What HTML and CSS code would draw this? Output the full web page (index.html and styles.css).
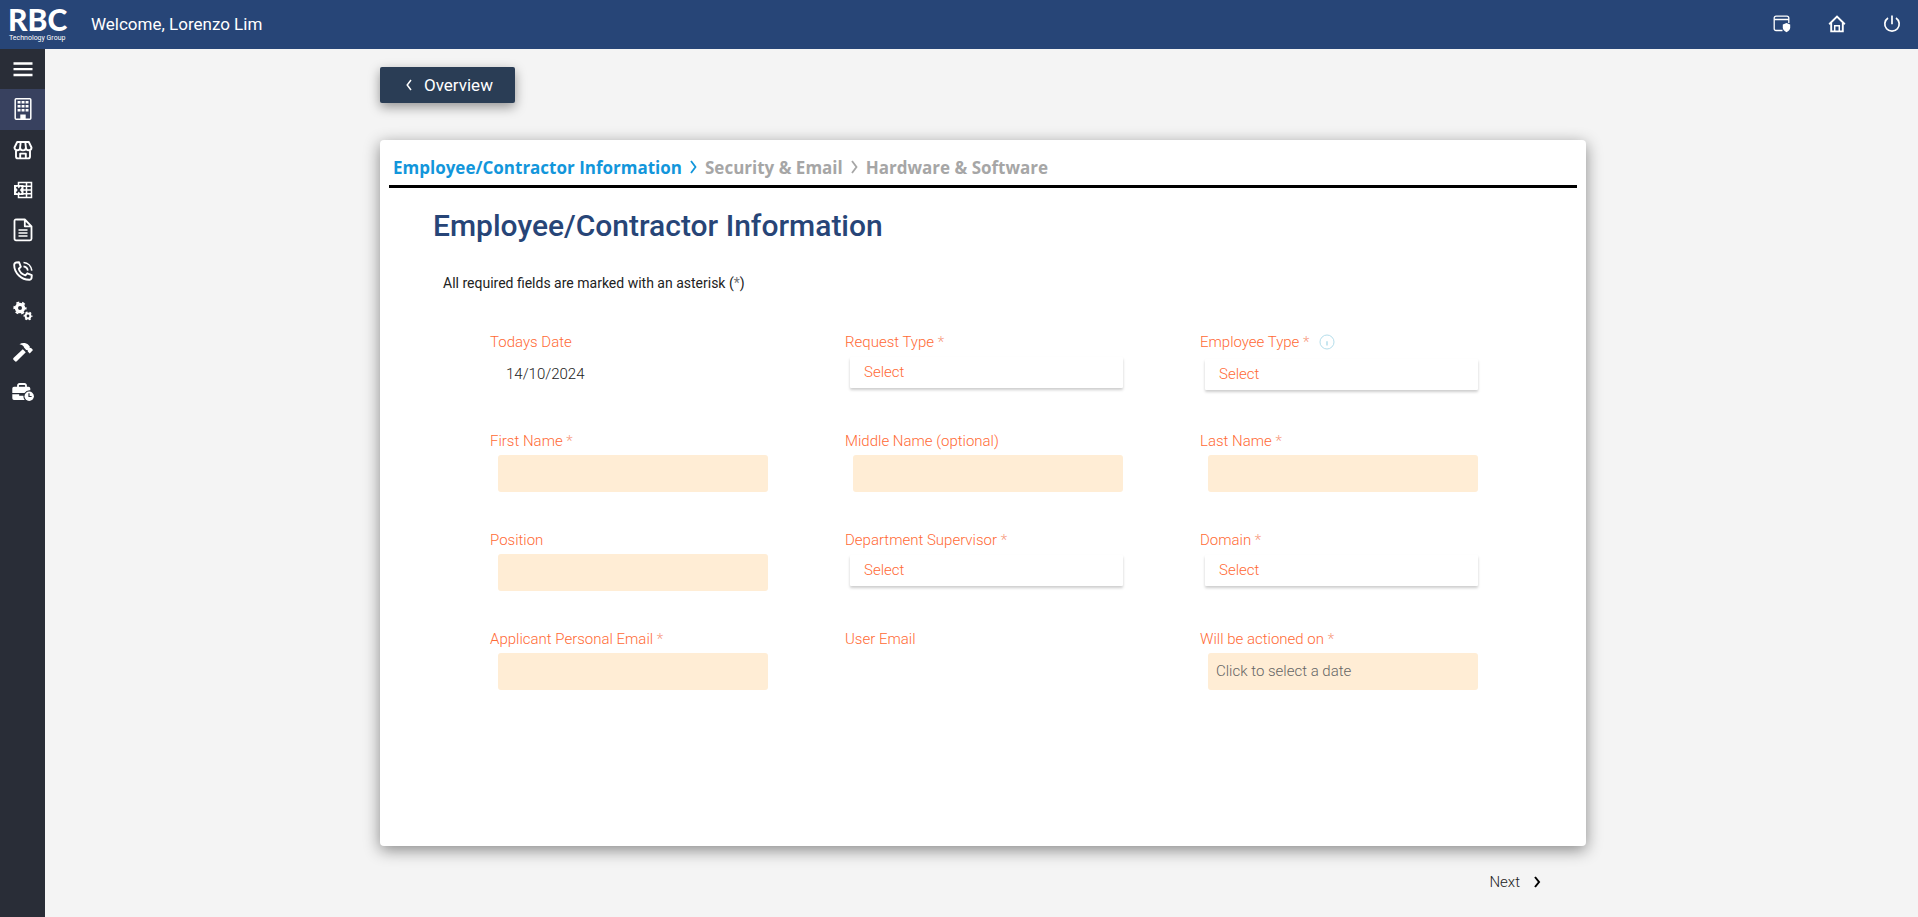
FILE: index.html
```html
<!DOCTYPE html>
<html lang="en">
<head>
<meta charset="utf-8">
<title>Employee/Contractor Information</title>
<link rel="stylesheet" href="styles.css">
</head>
<body>
<header class="topbar">
  <a class="logo" href="#"><span class="logo-name">RBC</span><span class="logo-sub">Technology Group</span></a>
  <span class="welcome">Welcome, Lorenzo Lim</span>
  <div class="actions">
    <button class="icon-btn" type="button" aria-label="Security window">
      <svg width="18" height="18" viewBox="0 0 18 18" fill="none" stroke="#fff"><path d="M9.500 15.500H3A1.800 1.800 0 0 1 1.200 13.700V3A1.800 1.800 0 0 1 3 1.200h11A1.800 1.800 0 0 1 15.800 3v5" stroke-width="1.300"/><path d="M1.200 4.500h14.600" stroke-width="1.500"/><path d="M13.500 8l3.700 1.400v3.200c0 2.200-1.500 3.700-3.700 4.700-2.200-1-3.700-2.500-3.700-4.700V9.400z" fill="#fff" stroke="none"/></svg>
    </button>
    <button class="icon-btn" type="button" aria-label="Home">
      <svg width="18" height="18" viewBox="0 0 18 18" fill="none" stroke="#fff" stroke-width="1.900"><path d="M1.200 9.200L9 1.500l7.800 7.700"/><path d="M3.200 8v8.400h11.600V8"/><path d="M6.700 16v-5.300h4.600V16" stroke-width="1.500"/></svg>
    </button>
    <button class="icon-btn" type="button" aria-label="Log out">
      <svg width="18" height="18" viewBox="0 0 18 18" fill="none" stroke="#fff" stroke-width="1.700"><path d="M9 .5v8.700M5 3A7.200 7.200 0 1 0 13 3"/></svg>
    </button>
  </div>
</header>
<div class="shell">
  <nav class="sidebar" aria-label="Main">
    <div class="side-list">
    <button class="side-item" type="button" aria-label="Menu"><svg width="20" height="20" viewBox="0 0 20 20"><path d="M.5 4.500h19M.5 10.200h19M.5 16h19" stroke="#fff" stroke-width="2.300"/></svg></button>
    <a class="side-item active" href="#" aria-label="Company"><svg width="18" height="22" viewBox="0 0 18 22" fill="#fff"><rect x="1.200" y=".8" width="15.600" height="20.400" rx="1" fill="none" stroke="#fff" stroke-width="1.500"/><path d="M3.600 3h2.900v2.600H3.600zM7.600 3h2.900v2.600H7.600zM11.600 3h2.900v2.600h-2.900zM3.600 7h2.900v2.600H3.600zM7.600 7h2.900v2.600H7.600zM11.600 7h2.900v2.600h-2.900zM3.600 11h2.900v2.600H3.600zM7.600 11h2.900v2.600H7.600zM11.600 11h2.900v2.600h-2.900zM6.300 16.500h5.400v4.500H6.300z"/></svg></a>
    <a class="side-item" href="#" aria-label="Store"><svg width="20" height="20" viewBox="0 0 20 20" fill="none" stroke="#fff" stroke-width="1.900" stroke-linejoin="round"><path d="M4.200 2h11.600L18.500 7.500a2.700 2.700 0 0 1-5.600 0 2.900 2.900 0 0 1-5.800 0 2.700 2.700 0 0 1-5.600 0zM7.700 2l-.6 5.500M12.300 2l.6 5.500"/><path d="M3 10.500v5.900a2 2 0 0 0 2 2h10a2 2 0 0 0 2-2v-5.900M7.200 18v-4.400h5.600V18"/></svg></a>
    <a class="side-item" href="#" aria-label="Spreadsheets"><svg width="20" height="18" viewBox="0 0 20 18"><path d="M5.500 1.500h13v15h-13zM10 5.200h8.500M10 9h8.500M10 12.800h8.500M13.500 1.500v15" fill="none" stroke="#fff" stroke-width="1.500"/><path d="M1 4h9.500v10H1z" fill="#fff"/><path d="M3.600 6l4.400 6M8 6l-4.400 6" stroke="#292d37" stroke-width="1.900"/></svg></a>
    <a class="side-item" href="#" aria-label="Documents"><svg width="20" height="24" viewBox="0 0 20 24" fill="none" stroke="#fff" stroke-width="1.800" stroke-linejoin="round"><path d="M3.500 1.500h8.300l6.700 6.800v12.500a1.500 1.500 0 0 1-1.500 1.500H3A1.500 1.500 0 0 1 1.500 20.800V3A1.500 1.500 0 0 1 3.500 1.500zM11.800 1.500v6.800h6.700"/><path d="M5.500 12h9M5.500 15h9M5.500 18h9" stroke-width="1.700"/></svg></a>
    <a class="side-item" href="#" aria-label="Calls"><svg width="20" height="20" viewBox="0 0 20 20" fill="none" stroke="#fff" stroke-width="1.900" stroke-linejoin="round"><path d="M3.200 1.500L6 1.200l1.800 4.600-2 1.900c.8 3 3.500 5.600 6.600 6.600l1.900-2 4.500 1.900-.3 3.100c-.3.900-.9 1.300-1.800 1.400C8.500 19 1.200 12 1.200 4c0-1.500.6-2.200 2-2.500z"/><path d="M10.500 5.300a5 5 0 0 1 4.300 4.400M10.500 1.500c4.500.3 7.800 3.600 8.300 8.200" stroke-width="1.700"/></svg></a>
    <a class="side-item" href="#" aria-label="Settings"><svg width="20" height="20" viewBox="0 0 20 20" fill="none" stroke="#fff"><circle cx="7" cy="7" r="3.600" stroke-width="3.200"/><circle cx="7" cy="7" r="5.700" stroke-width="1.800" stroke-dasharray="3 2.970" stroke-dashoffset="1.500"/><circle cx="15" cy="15" r="2.400" stroke-width="2"/><circle cx="15" cy="15" r="3.800" stroke-width="1.300" stroke-dasharray="2 1.980" stroke-dashoffset="1"/></svg></a>
    <a class="side-item" href="#" aria-label="Tools"><svg width="20" height="20" viewBox="0 0 20 20" fill="#fff"><path d="M6.500 2.200C9 .5 13 .5 15.500 3l1.300 1.500-.2 1.200 1.500.2L20 8l-3.300 3.400-1.900-2-.2-1.500-1.400.2-2-2.300c-.4-1.800-2-3-4.700-3.600z"/><path d="M9.800 7.200l3 3-8.800 8.900c-.7.700-1.500.7-2.200 0l-1.100-1.100c-.7-.7-.7-1.500 0-2.200z"/></svg></a>
    <a class="side-item" href="#" aria-label="Work history"><svg width="22" height="18" viewBox="0 0 22 18"><path d="M6 4V2.500A1.500 1.500 0 0 1 7.500 1h5A1.500 1.500 0 0 1 14 2.500V4" fill="none" stroke="#fff" stroke-width="1.800"/><path d="M2 3.800h14.500A1.800 1.800 0 0 1 18.300 5.600V7.300A6 6 0 0 0 12.500 10H.3V5.500A1.700 1.700 0 0 1 2 3.800zM.3 11.200H7.200v1.500h4.200A6 6 0 0 0 12.700 17H2A1.700 1.700 0 0 1 .3 15.300z" fill="#fff"/><circle cx="17.200" cy="13.200" r="4.700" fill="#fff"/><path d="M17 10.300v3.200h2.600" fill="none" stroke="#292d37" stroke-width="1.200"/></svg></a>
    </div>
  </nav>
  <main class="main">
    <button class="overview" type="button"><svg width="6" height="12" viewBox="0 0 6 12" fill="none" stroke="#fff" stroke-width="1.500"><path d="M5 1L1.200 6 5 11"/></svg>Overview</button>
    <form class="card">
      <ol class="steps">
        <li class="current">Employee/Contractor Information</li>
        <li class="sep current" aria-hidden="true"><svg width="7" height="14" viewBox="0 0 7 14" fill="none" stroke="currentColor" stroke-width="1.800"><path d="M1 1l4.500 6L1 13"/></svg></li>
        <li>Security &amp; Email</li>
        <li class="sep" aria-hidden="true"><svg width="7" height="14" viewBox="0 0 7 14" fill="none" stroke="currentColor" stroke-width="1.800"><path d="M1 1l4.500 6L1 13"/></svg></li>
        <li>Hardware &amp; Software</li>
      </ol>
      <h1 class="title">Employee/Contractor Information</h1>
      <p class="note">All required fields are marked with an asterisk (<span class="req">*</span>)</p>
      <div class="fields">
        <div class="field"><span class="label">Todays Date</span><span class="date">14/10/2024</span></div>
        <div class="field"><label class="label" for="request">Request Type <span class="req">*</span></label><select class="select" id="request"><option>Select</option></select></div>
        <div class="field"><label class="label with-info" for="etype"><span>Employee Type <span class="req">*</span></span><svg class="info" width="16" height="16" viewBox="0 0 16 16" fill="none" stroke="#b5deeb"><circle cx="8" cy="8" r="7"/><path d="M8 7.200v4.300" stroke-width="1.500"/></svg></label><select class="select" id="etype"><option>Select</option></select></div>
        <div class="field"><label class="label" for="first">First Name <span class="req">*</span></label><input class="input" id="first" type="text"></div>
        <div class="field"><label class="label" for="middle">Middle Name (optional)</label><input class="input" id="middle" type="text"></div>
        <div class="field"><label class="label" for="last">Last Name <span class="req">*</span></label><input class="input" id="last" type="text"></div>
        <div class="field"><label class="label" for="position">Position</label><input class="input" id="position" type="text"></div>
        <div class="field"><label class="label" for="supervisor">Department Supervisor <span class="req">*</span></label><select class="select" id="supervisor"><option>Select</option></select></div>
        <div class="field"><label class="label" for="domain">Domain <span class="req">*</span></label><select class="select" id="domain"><option>Select</option></select></div>
        <div class="field"><label class="label" for="email">Applicant Personal Email <span class="req">*</span></label><input class="input" id="email" type="email"></div>
        <div class="field"><span class="label">User Email</span></div>
        <div class="field"><label class="label" for="actioned">Will be actioned on <span class="req">*</span></label><input class="input" id="actioned" type="text" placeholder="Click to select a date"></div>
      </div>
    </form>
    <button class="next" type="button">Next<svg width="7" height="12" viewBox="0 0 7 12" fill="none" stroke="#000" stroke-width="2"><path d="M1 1l4 5-4 5"/></svg></button>
  </main>
</div>
</body>
</html>
```
FILE: styles.css
```css
* { box-sizing: border-box; }
body {
  margin: 0;
  min-height: 100vh;
  display: flex;
  flex-direction: column;
  background: #f4f4f4;
  font-family: Roboto, "Open Sans", sans-serif;
  font-size: 15px;
  color: #222;
}
button, input, select { font: inherit; color: inherit; border: 0; margin: 0; }
button { cursor: pointer; background: none; padding: 0; }
svg { display: block; flex: none; }

.topbar {
  display: flex;
  align-items: center;
  height: 49px;
  padding: 0 17px 2px 8px;
  background: #274577;
  color: #fff;
}
.logo {
  display: flex;
  flex-direction: column;
  width: 83px;
  color: #fff;
  text-decoration: none;
}
.logo-name { font-family: Lato, "Open Sans", sans-serif; font-size: 30px; line-height: 28px; font-weight: 900; }
.logo-sub { padding-left: 1px; font-size: 7px; line-height: 10px; white-space: nowrap; }
.welcome { font-size: 17px; line-height: 24px; }
.actions { display: flex; gap: 37px; margin-left: auto; }
.icon-btn { width: 18px; height: 18px; }

.shell { flex: 1; display: flex; }
.sidebar { width: 45px; flex: none; background: #292d37; }
.side-list {
  display: grid;
  grid-template-rows: repeat(9, 1fr);
  height: 364px;
}
.side-item { display: flex; align-items: center; justify-content: center; padding-bottom: 1px; }
.active { background: #38415f; }

.main {
  flex: 1;
  display: flex;
  flex-direction: column;
  align-items: flex-start;
  padding: 18px 332px 20px 335px;
}
.overview {
  display: flex;
  align-items: center;
  gap: 12px;
  height: 36px;
  padding: 0 22px 1px 26px;
  border-radius: 2px;
  background: #2a3d55;
  color: #fff;
  font-size: 17px;
  box-shadow: 0 4px 12px rgba(0, 0, 0, .4);
}
.card {
  width: 100%;
  min-height: 706px;
  margin-top: 37px;
  padding: 9px;
  border-radius: 4px;
  background: #fff;
  box-shadow: 0 4px 16px rgba(0, 0, 0, .45);
}
.steps {
  display: flex;
  align-items: center;
  gap: 8px;
  height: 39px;
  margin: 0;
  padding: 0 4px;
  border-bottom: 3px solid #000;
  list-style: none;
  font-family: "Open Sans", "Noto Sans", sans-serif;
  font-size: 17px;
  font-weight: 700;
  color: #a6a6a6;
}
.current { color: #1296db; }
.title {
  margin: 20px 0 0 44px;
  font-size: 30px;
  line-height: 36px;
  font-weight: 500;
  color: #274577;
}
.note { margin: 29px 0 0 54px; font-size: 14px; line-height: 20px; }
.note .req { color: #777; }
.fields {
  display: grid;
  grid-template-columns: repeat(3, 1fr);
  grid-auto-rows: 99px;
  margin: 38px 22px 0 101px;
}
.field { display: flex; flex-direction: column; align-items: flex-start; }
.label { line-height: 22px; font-weight: 300; color: #ff6a35; }
.with-info { display: flex; align-items: flex-start; gap: 10px; min-height: 24px; }
.info { margin-top: 3px; }
.label .req { color: #f79a80; }
.date { margin: 11px 0 0 16px; line-height: 20px; font-weight: 300; }
.input {
  width: calc(100% - 85px);
  height: 37px;
  margin: 3px 0 0 8px;
  padding: 0 8px 1px;
  border-radius: 3px;
  background: #ffedd5;
  font-weight: 300;
}
.input::placeholder { color: #666; opacity: 1; }
.select {
  appearance: none;
  width: calc(100% - 82px);
  height: 31px;
  margin: 4px 0 0 5px;
  padding: 0 14px 2px;
  border-radius: 1px;
  background: #fff;
  color: #ff6a35;
  font-weight: 300;
  box-shadow: 0 2px 3px rgba(0, 0, 0, .2);
}
.next {
  display: flex;
  align-items: center;
  gap: 14px;
  margin: 26px 45px 0 auto;
  line-height: 20px;
  font-weight: 300;
}
@media (max-width: 1400px) {
  .main { padding-left: 24px; padding-right: 24px; }
}
```
